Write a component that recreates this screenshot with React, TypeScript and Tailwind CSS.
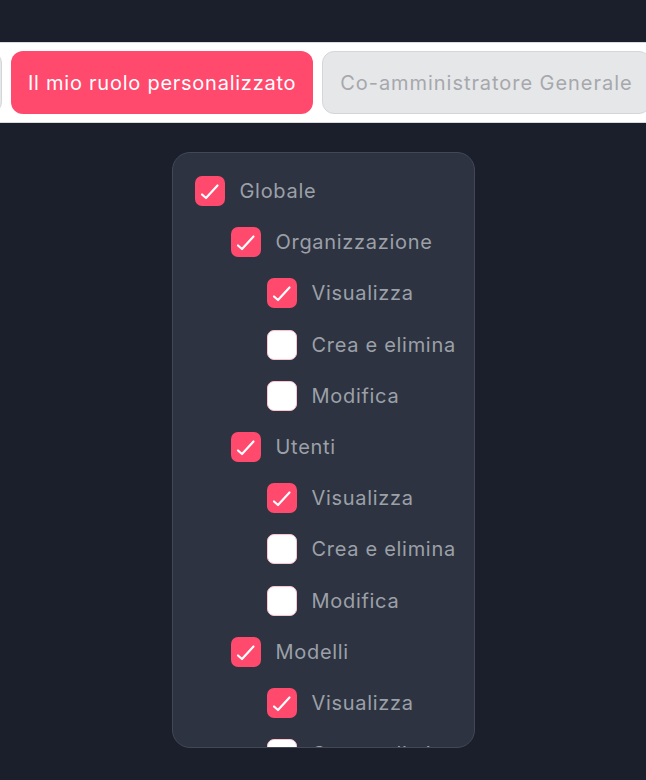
import React from "react";

type Node = { label: string; checked: boolean; depth: number };

const tree: Node[] = [
  { label: "Globale", checked: true, depth: 0 },
  { label: "Organizzazione", checked: true, depth: 1 },
  { label: "Visualizza", checked: true, depth: 2 },
  { label: "Crea e elimina", checked: false, depth: 2 },
  { label: "Modifica", checked: false, depth: 2 },
  { label: "Utenti", checked: true, depth: 1 },
  { label: "Visualizza", checked: true, depth: 2 },
  { label: "Crea e elimina", checked: false, depth: 2 },
  { label: "Modifica", checked: false, depth: 2 },
  { label: "Modelli", checked: true, depth: 1 },
  { label: "Visualizza", checked: true, depth: 2 },
  { label: "Crea e elimina", checked: false, depth: 2 },
  { label: "Modifica", checked: false, depth: 2 },
];

const indent = ["pl-0", "pl-[36px]", "pl-[72px]"];

const Box = ({ checked }: { checked: boolean }) =>
  checked ? (
    <span className="h-[30px] w-[30px] shrink-0 rounded-[7px] bg-[#ff4a6e]">
      <svg width="30" height="30" viewBox="0 0 30 30" fill="none">
        <path
          d="M7 18.5 L11 22 L22.5 9.5"
          stroke="white"
          strokeWidth="2.2"
          strokeLinecap="round"
          strokeLinejoin="round"
        />
      </svg>
    </span>
  ) : (
    <span className="h-[30px] w-[30px] shrink-0 rounded-[7px] border border-[#ffc2cf] bg-white" />
  );

export default function App() {
  return (
    <div
      className="min-h-screen bg-[#1a1f2b] pt-[42px]"
      style={{ fontFamily: "Inter, 'Noto Sans', sans-serif" }}
    >
      {/* role tabs */}
      <div className="flex h-[81px] items-center gap-[9px] overflow-hidden border-y border-[#d9dadd] bg-white">
        <div className="-ml-[40px] h-[63px] w-[42px] shrink-0 rounded-[12px] border border-[#d5d6d9] bg-[#e6e7e9]" />
        <button className="h-[63px] shrink-0 rounded-[12px] bg-[#ff4a6e] px-[17px] text-[20px] tracking-[0.75px] text-white">
          Il mio ruolo personalizzato
        </button>
        <button className="h-[63px] shrink-0 rounded-[12px] border border-[#d5d6d9] bg-[#e6e7e9] px-[17px] text-[20px] tracking-[0.95px] text-[#a6a8ad]">
          Co-amministratore Generale
        </button>
      </div>

      {/* permissions tree */}
      <div className="mt-[29px] flex justify-center">
        <div className="h-[596px] w-[303px] overflow-hidden rounded-[18px] border border-[#424856] bg-[#2d3340] pl-[22px] pt-[23px]">
          <div className="flex flex-col gap-[21.2px]">
            {tree.map((n, i) => (
              <div key={i} className={`flex h-[30px] items-center gap-[15px] ${indent[n.depth]}`}>
                <Box checked={n.checked} />
                <span className="text-[20px] tracking-[0.7px] text-[#9ca0a8]">{n.label}</span>
              </div>
            ))}
          </div>
        </div>
      </div>
    </div>
  );
}
